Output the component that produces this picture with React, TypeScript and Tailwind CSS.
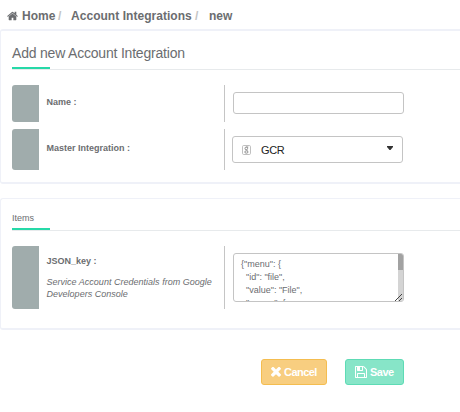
import type { ReactNode } from 'react';

function Glyph({ d, box, className }: { d: string; box: string; className: string }) {
  return (
    <svg viewBox={box} className={className} fill="currentColor" aria-hidden="true">
      <path d={d} />
    </svg>
  );
}

const HOME =
  'M1408 992v480q0 26-19 45t-45 19H960v-384H704v384H320q-26 0-45-19t-19-45V992q0-1 .5-3t.5-3l575-474 575 474q1 2 1 6zm223-69l-62 74q-8 9-21 11h-3q-13 0-21-7L832 424l-692 577q-12 8-24 7-13-2-21-11l-62-74q-8-10-7-23.5T37 878l719-599q32-26 76-26t76 26l244 204V288q0-14 9-23t23-9h192q14 0 23 9t9 23v408l219 182q10 8 11 21.5t-7 23.5z';
const TIMES =
  'M1490 1322q0 40-28 68l-136 136q-28 28-68 28t-68-28l-294-294-294 294q-28 28-68 28t-68-28l-136-136q-28-28-28-68t28-68l294-294-294-294q-28-28-28-68t28-68l136-136q28-28 68-28t68 28l294 294 294-294q28-28 68-28t68 28l136 136q28 28 28 68t-28 68l-294 294 294 294q28 28 28 68z';
const FLOPPY =
  'M512 1536h768v-384h-768v384zm896 0h128v-896q0-14-10-38.5t-20-34.5l-281-281q-10-10-34-20t-39-10v416q0 40-28 68t-68 28h-576q-40 0-68-28t-28-68v-416h-128v1280h128v-416q0-40 28-68t68-28h832q40 0 68 28t28 68v416zm-384-928v-320q0-13-9.5-22.5t-22.5-9.5h-192q-13 0-22.5 9.5t-9.5 22.5v320q0 13 9.5 22.5t22.5 9.5h192q13 0 22.5-9.5t9.5-22.5zm640 32v928q0 40-28 68t-68 28h-1344q-40 0-68-28t-28-68v-1344q0-40 28-68t68-28h928q40 0 88 20t76 48l280 280q28 28 48 76t20 88z';

function Heading({ children, className }: { children: ReactNode; className: string }) {
  return (
    <div className={`ml-[11px] flex flex-col justify-end border-b border-[#e7eaec] ${className}`}>
      {children}
      <div className="h-0.5 w-[38px] bg-[#26d9a8]" />
    </div>
  );
}

function Row({ label, control, className }: { label: ReactNode; control: ReactNode; className: string }) {
  return (
    <div className={`ml-[11px] flex ${className}`}>
      <div className="w-[27px] shrink-0 rounded-l-[3px] bg-[#a0acac]" />
      <div className="w-[185px] shrink-0 pl-[7.5px]">{label}</div>
      <div className="border-l border-[#c5c5c5]">{control}</div>
    </div>
  );
}

export default function App() {
  return (
    <div className="h-[412px] w-[460px] overflow-hidden bg-white font-['Liberation_Sans',Arial,sans-serif] text-[#6b6d70]">
      <nav className="flex h-[29px] items-center pt-[3px] pl-[7px] text-[12px] leading-4 font-bold">
        <Glyph d={HOME} box="0 0 1664 1792" className="mr-[4px] h-3 w-[11px]" />
        <span className="w-[36px]">Home</span>
        <span className="w-[13px] text-[#c4c4c4]">/</span>
        <span className="w-[124px] tracking-[0.04px] whitespace-nowrap">Account Integrations</span>
        <span className="w-[14px] text-[#c4c4c4]">/</span>
        <span>new</span>
      </nav>

      <section className="h-[155px] rounded-l-[3px] border-y-2 border-l border-[#eff1f8]">
        <Heading className="h-[39px]">
          <h1 className="mb-[6px] text-[14px] leading-4 tracking-[-0.2px]">Add new Account Integration</h1>
        </Heading>
        <Row
          className="mt-[15px] h-[37px]"
          label={<div className="pt-[11px] text-[9px] leading-3 font-bold">Name :</div>}
          control={<input aria-label="Name" className="mt-[7px] ml-2 block h-[22px] w-[171px] rounded-[3px] border border-[#c4c4c4] bg-white outline-none" />}
        />
        <Row
          className="mt-[7px] h-[41px]"
          label={<div className="pt-[13px] text-[9px] leading-3 font-bold">Master Integration :</div>}
          control={
            <button className="mt-[7px] ml-[7px] flex h-[27px] w-[171px] items-center rounded-[3px] border border-[#c4c4c4] pl-[9px] text-[11px] text-[#222]">
              <svg viewBox="0 0 9 10" className="mt-px h-[10px] w-[9px]" fill="none" stroke="#858585" strokeWidth="0.9">
                <rect x="0.5" y="0.5" width="8" height="9" rx="1.2" stroke="#b9b9b9" />
                <ellipse cx="4.3" cy="3.4" rx="1.3" ry="1.4" />
                <path d="M4.3 2h2M4.6 4.8l.9.9" />
                <ellipse cx="4.4" cy="7" rx="1.6" ry="1.2" />
              </svg>
              <span className="ml-[10px] leading-3 tracking-[-0.4px]">GCR</span>
              <svg viewBox="0 0 6 4" className="mr-[9px] mb-[4px] ml-auto h-[4px] w-[6px]" fill="#333">
                <path d="M0 0h6v1L3.5 4h-1L0 1z" />
              </svg>
            </button>
          }
        />
      </section>

      <section className="mt-[14px] h-[132px] rounded-l-[3px] border-t border-b-2 border-l border-[#eff1f8]">
        <Heading className="h-8">
          <h2 className="mb-[4px] text-[9px] leading-3">Items</h2>
        </Heading>
        <Row
          className="mt-[15px] h-[63px]"
          label={
            <div className="pt-[9px] text-[9px] leading-3">
              <div className="font-bold">JSON_key :</div>
              <p className="mt-[9px] tracking-[0.015px] whitespace-nowrap italic">
                Service Account Credentials from Google
                <br />
                Developers Console
              </p>
            </div>
          }
          control={
            <div className="relative mt-[7px] ml-2 flex h-[49px] w-[171px] justify-between overflow-hidden rounded-[3px] border border-[#c4c4c4]">
              <pre className="pt-[4px] pl-[7px] font-['Liberation_Sans',Arial,sans-serif] text-[9px] leading-[13px]">
                {'{"menu": {\n  "id": "file",\n  "value": "File",\n  "popup": {'}
              </pre>
              <div className="w-[5px] bg-[#d4d4d4]">
                <div className="h-4 bg-[#a2a2a2]" />
              </div>
              <svg viewBox="0 0 8 8" className="absolute right-0 bottom-0 size-2" fill="#444" shapeRendering="crispEdges">
                <path d="M0 7h1v1H0zM1 6h1v1H1zM2 5h1v1H2zM3 4h1v1H3zM4 3h1v1H4zM5 2h1v1H5zM6 1h1v1H6zM4 7h1v1H4zM5 6h1v1H5zM6 5h1v1H6z" />
              </svg>
            </div>
          }
        />
      </section>

      <div className="mt-[29px] flex gap-[18px] pl-[261px] text-[11px] leading-3 font-bold text-white">
        <button className="flex h-[26px] w-[66px] items-center rounded-[3px] border border-[#f4bd50] bg-[#f8ce80] pl-[9px]">
          <Glyph d={TIMES} box="302 384 1188 1188" className="mr-[3px] size-[10px]" />
          <span className="tracking-[-0.55px]">Cancel</span>
        </button>
        <button className="flex h-[26px] w-[59px] items-center rounded-[3px] border border-[#5edbb5] bg-[#87e5c8] pl-[9px]">
          <Glyph d={FLOPPY} box="128 128 1536 1536" className="mr-[3px] size-3" />
          <span className="tracking-[-0.5px]">Save</span>
        </button>
      </div>
    </div>
  );
}
